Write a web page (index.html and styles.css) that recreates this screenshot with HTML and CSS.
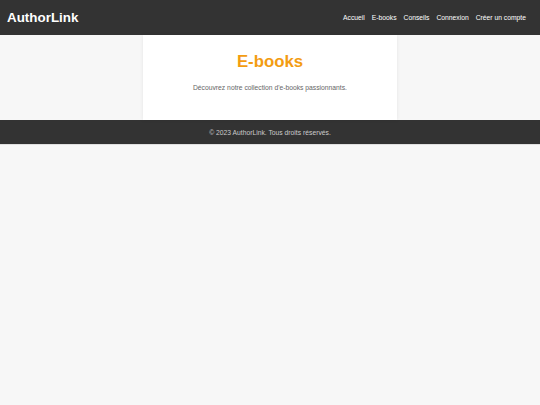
FILE: index.html
```html
<!DOCTYPE html>
<html lang="fr">
<head>
<meta charset="utf-8">
<title>AuthorLink - E-books</title>
<link rel="stylesheet" href="styles.css">
</head>
<body>
<header class="site-header">
  <div class="logo">AuthorLink</div>
  <nav class="nav">
    <a href="#">Accueil</a>
    <a href="#">E-books</a>
    <a href="#">Conseils</a>
    <a href="#">Connexion</a>
    <a href="#">Créer un compte</a>
  </nav>
</header>
<main class="content">
  <section class="card">
    <h1 class="title">E-books</h1>
    <p class="lead">Découvrez notre collection d'e-books passionnants.</p>
  </section>
</main>
<footer class="site-footer">
  <p>© 2023 AuthorLink. Tous droits réservés.</p>
</footer>
</body>
</html>
```

FILE: styles.css
```css
* { box-sizing: border-box; }
html, body { margin: 0; padding: 0; }
body {
  background: #f7f7f7;
  font-family: "Liberation Sans", Arial, sans-serif;
  color: #333;
}
.site-header {
  height: 35px;
  background: #333;
  display: flex;
  align-items: center;
  justify-content: space-between;
  padding: 0 14px 0 7px;
}
.logo {
  color: #fff;
  font-weight: bold;
  font-size: 13.4px;
}
.nav {
  display: flex;
  gap: 7px;
}
.nav a {
  color: #fff;
  text-decoration: none;
  font-size: 6.75px;
}
.content {
  display: flex;
  justify-content: center;
}
.card {
  width: 254px;
  height: 85px;
  background: #fff;
  box-shadow: 0 0 4px rgba(0,0,0,0.08);
  text-align: center;
  padding-top: 17px;
}
.title {
  margin: 0;
  color: #f39c12;
  font-size: 16.8px;
  line-height: 20px;
}
.lead {
  margin: 12px 0 0;
  color: #666;
  font-size: 6.75px;
}
.site-footer {
  background: #333;
  height: 25px;
  display: flex;
  align-items: center;
  justify-content: center;
  border-bottom: 1px solid #e0e0e0;
}
.site-footer p {
  margin: 0;
  color: #ccc;
  font-size: 6.75px;
}
```
